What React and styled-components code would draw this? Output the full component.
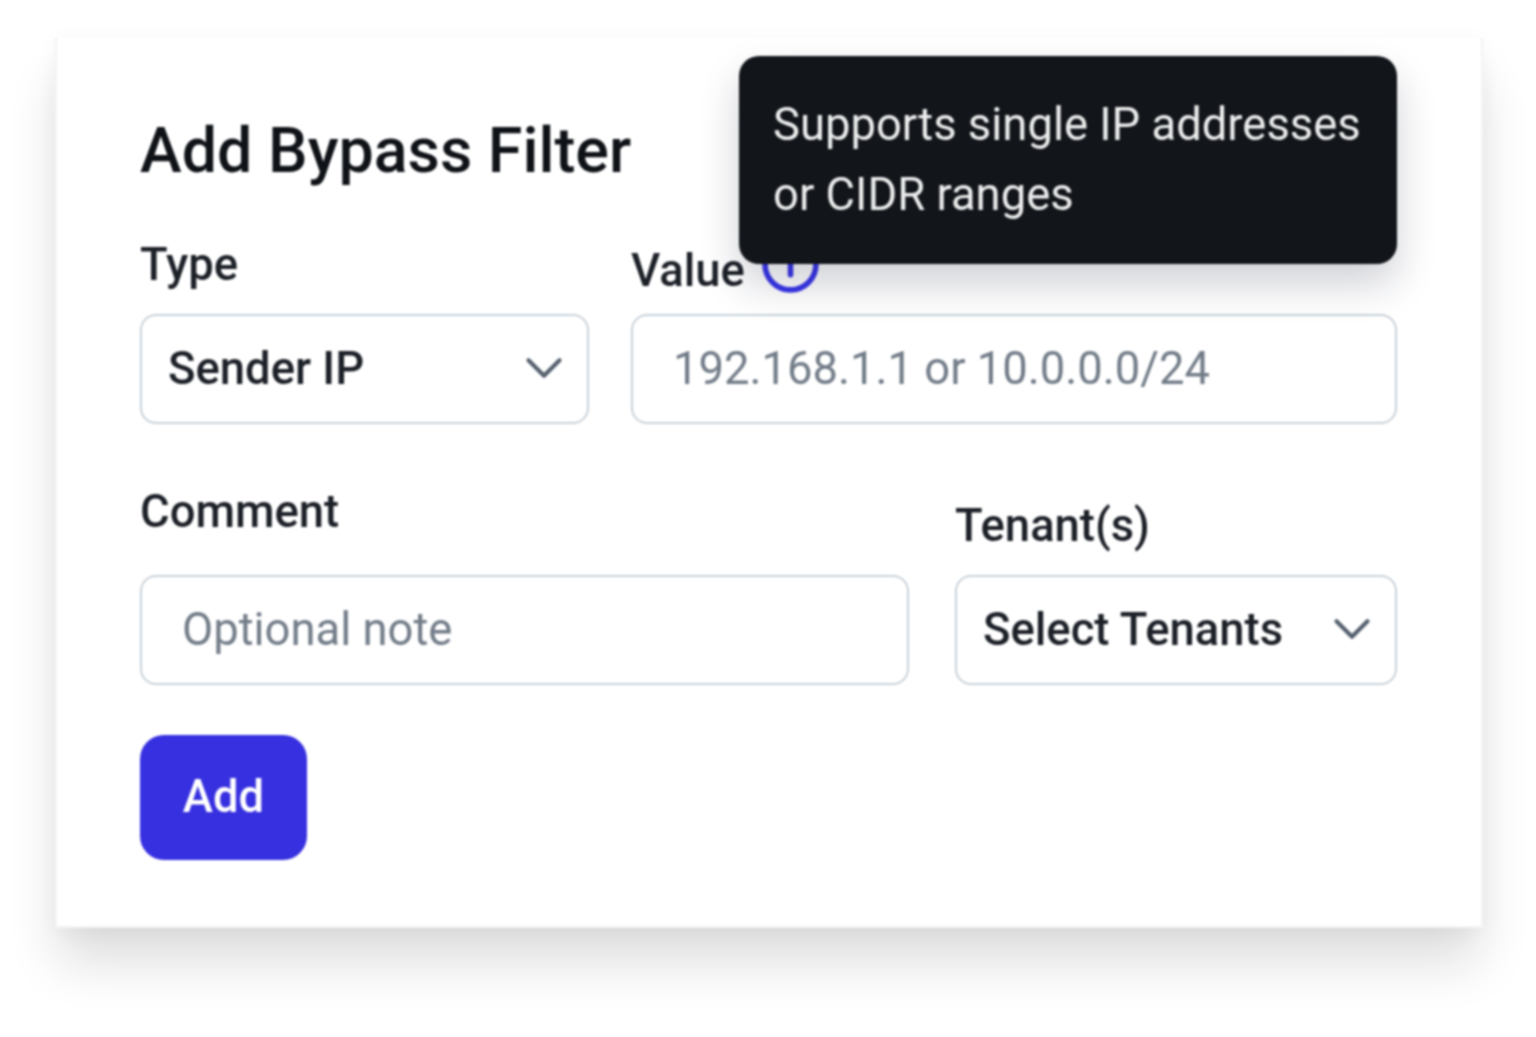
import React from "react";
import styled, { createGlobalStyle } from "styled-components";
import { ChevronDown } from "lucide-react";

const GlobalStyle = createGlobalStyle`
  html, body {
    margin: 0;
    padding: 0;
    background: #fff;
    font-family: Roboto, "Liberation Sans", sans-serif;
  }
`;

const Page = styled.div`
  width: 1536px;
  height: 1037px;
  padding: 38px 0 0 55px;
  box-sizing: border-box;
  overflow: hidden;
  filter: blur(0.9px);
`;

const Card = styled.div`
  position: relative;
  width: 1428px;
  height: 890px;
  box-sizing: border-box;
  padding: 73px 84px 0 83px;
  background: #fff;
  border: 2px solid #f4f4f5;
  border-top: none;
  box-shadow: 0 38px 48px -4px rgba(20, 20, 30, 0.14), 0 6px 24px rgba(20, 20, 30, 0.05);
`;

const Title = styled.h2`
  margin: 0;
  height: 79px;
  font-size: 62.8px;
  line-height: 80px;
  font-weight: 500;
  color: #0f1217;
`;

const Row = styled.div`
  display: flex;
  gap: ${({ $gap }) => $gap}px;
  align-items: flex-end;
  margin-top: ${({ $top }) => $top}px;
`;

const Field = styled.div`
  width: ${({ $width }) => ($width ? `${$width}px` : "auto")};
  flex: ${({ $width }) => ($width ? "none" : 1)};
`;

const Label = styled.label`
  display: flex;
  align-items: center;
  gap: 15px;
  font-size: 45.4px;
  line-height: 58px;
  font-weight: 500;
  color: #1c2027;
  margin-bottom: ${({ $bottom }) => $bottom}px;
`;

const InfoIcon = styled.svg`
  width: 61px;
  height: 61px;
  margin-top: -13px;
  color: #3a36ea;
`;

const Box = styled.div`
  height: 110px;
  box-sizing: border-box;
  display: flex;
  align-items: center;
  justify-content: space-between;
  padding: 0 12px 2px 26px;
  border: 2px solid #c9d2da;
  border-radius: 16px;
  background: #fff;
  font-size: 45.4px;
  font-weight: 500;
  color: #1c2027;
`;

const Input = styled.input`
  display: block;
  width: 100%;
  height: 110px;
  box-sizing: border-box;
  padding: 0 40px 2px;
  border: 2px solid #c9d2da;
  border-radius: 16px;
  background: #fff;
  font-family: inherit;
  font-size: 45.4px;
  color: #1c2027;
  outline: none;

  &::placeholder {
    color: #727c88;
    opacity: 1;
  }
`;

const Chevron = styled(ChevronDown)`
  width: 62px;
  height: 62px;
  color: #56616e;
`;

const AddButton = styled.button`
  display: block;
  width: 167px;
  height: 125px;
  margin-top: 50px;
  padding: 0 0 2px;
  border: none;
  border-radius: 24px;
  background: #3730e0;
  color: #fff;
  font-family: inherit;
  font-size: 45.4px;
  font-weight: 500;
`;

const Tooltip = styled.div`
  position: absolute;
  top: 18px;
  right: 84px;
  width: 658px;
  height: 208px;
  box-sizing: border-box;
  padding: 34px 30px 0 34px;
  border-radius: 20px;
  background: #12151a;
  color: #eceded;
  font-size: 45.4px;
  line-height: 70px;
  box-shadow: 0 20px 40px rgba(20, 24, 50, 0.2);
`;

export default function App() {
  return (
    <Page>
      <GlobalStyle />
      <Card>
        <Title>Add Bypass Filter</Title>
        <Row $gap={42} $top={46}>
          <Field $width={449}>
            <Label $bottom={20}>Type</Label>
            <Box>
              Sender IP
              <Chevron strokeWidth={1.6} />
            </Box>
          </Field>
          <Field>
            <Label $bottom={14}>
              Value
              <InfoIcon viewBox="0 0 24 24" fill="none" stroke="currentColor" strokeWidth="2.2" strokeLinecap="round">
                <circle cx="12" cy="12" r="10" />
                <path d="M12 16v-4" />
                <path d="M12 8h.01" />
              </InfoIcon>
            </Label>
            <Input placeholder="192.168.1.1 or 10.0.0.0/24" />
          </Field>
        </Row>
        <Row $gap={46} $top={59}>
          <Field>
            <Label $bottom={34}>Comment</Label>
            <Input placeholder="Optional note" />
          </Field>
          <Field $width={442}>
            <Label $bottom={20}>Tenant(s)</Label>
            <Box>
              Select Tenants
              <Chevron strokeWidth={1.6} />
            </Box>
          </Field>
        </Row>
        <AddButton>Add</AddButton>
        <Tooltip>Supports single IP addresses or CIDR ranges</Tooltip>
      </Card>
    </Page>
  );
}
